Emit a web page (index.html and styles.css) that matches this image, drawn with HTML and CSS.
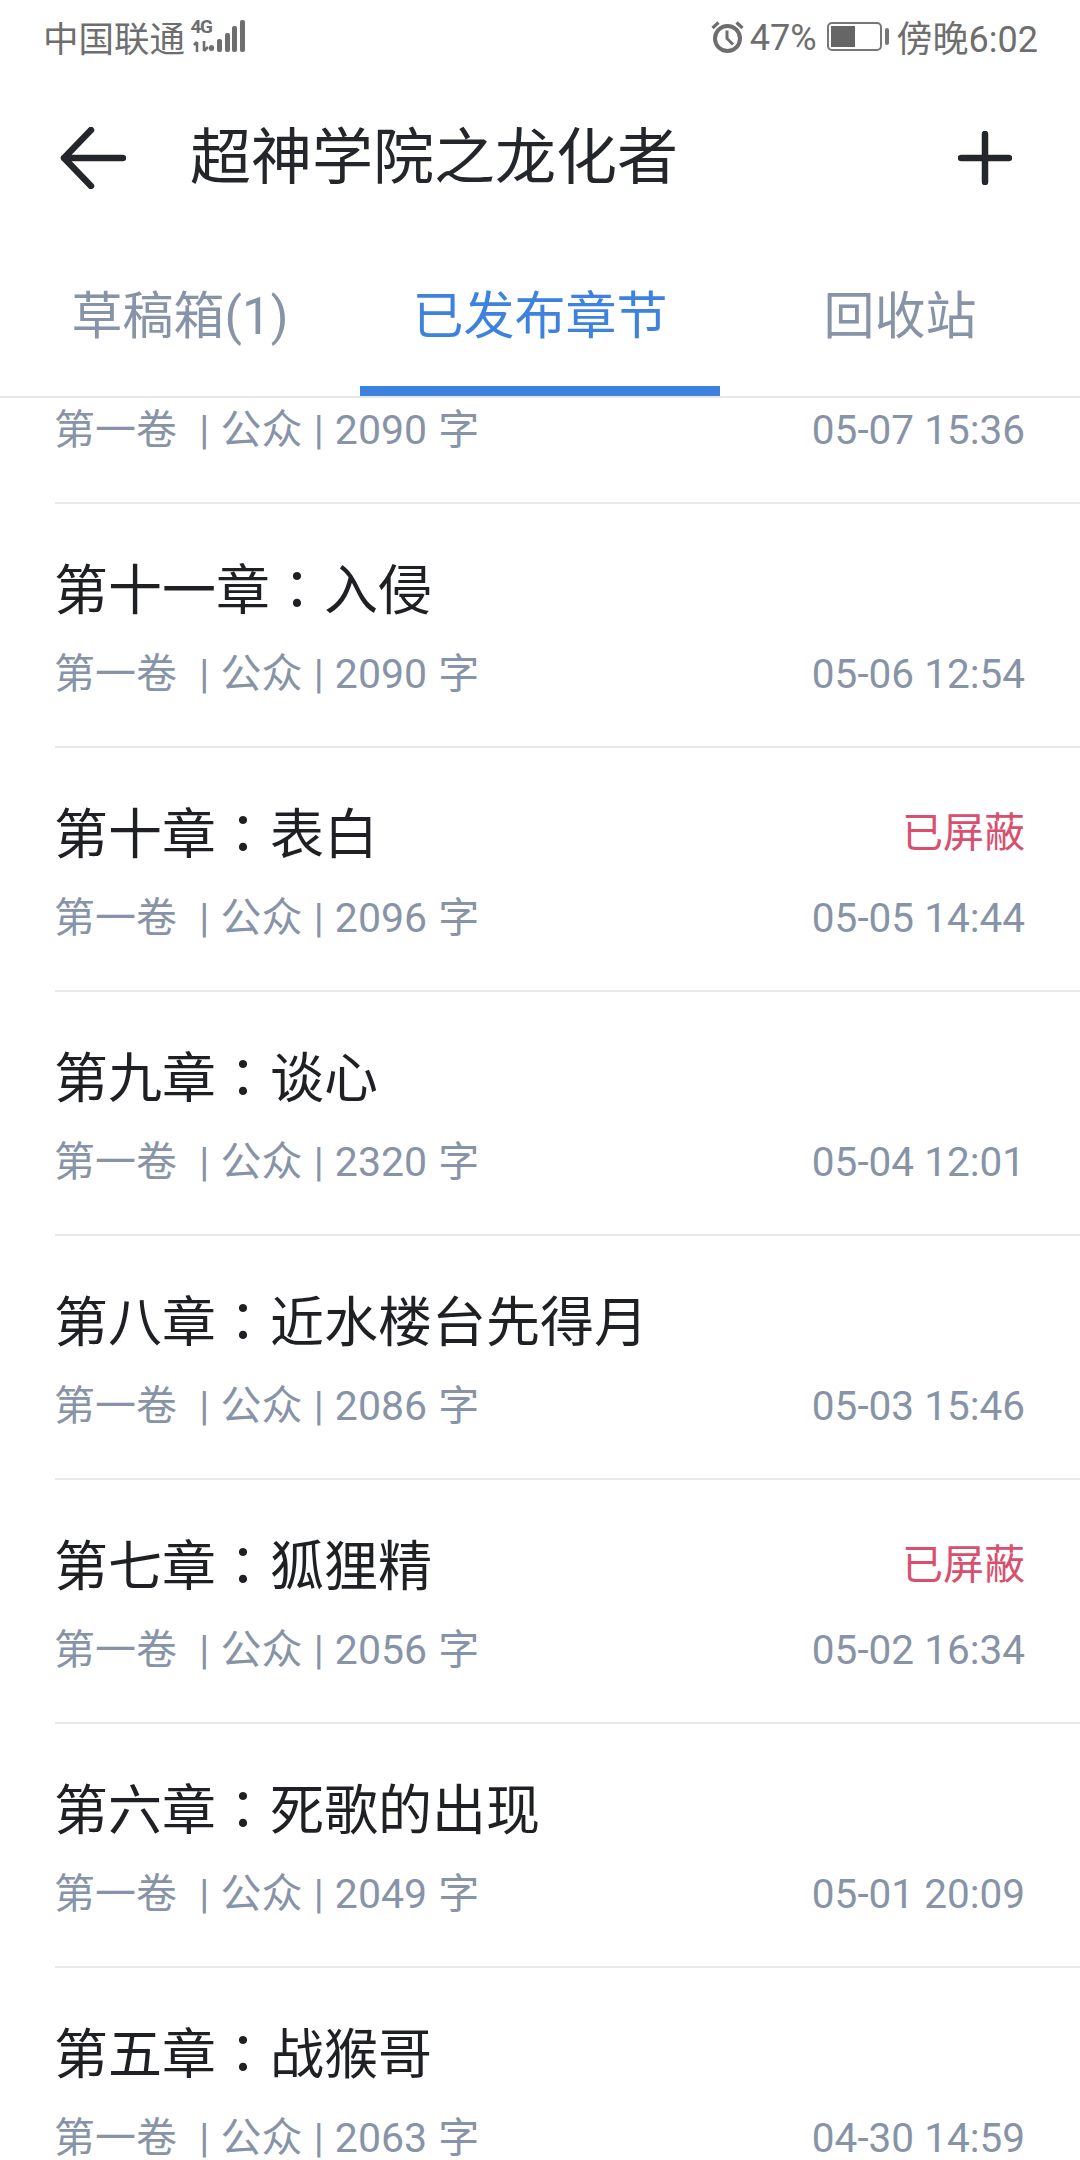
FILE: index.html
```html
<!DOCTYPE html>
<html lang="zh-CN">
<head>
<meta charset="utf-8">
<title>已发布章节</title>
<link rel="stylesheet" href="styles.css">
</head>
<body>
<div class="app">
  <div class="status">
    <div class="status-left">
      <span class="carrier">中国联通</span>
      <div class="net">
        <span class="net-label">4G</span>
        <svg class="net-arrows" width="17" height="11" viewBox="0 0 17 11"><path d="M4 11V1M1 4 4 1M11 0V10M11 10 15 6" fill="none" stroke="#6e6e6e" stroke-width="2.6"/></svg>
      </div>
      <svg class="signal" width="36" height="32" viewBox="0 0 36 32"><g fill="#6e6e6e"><rect x="0" y="25" width="5" height="6" rx="2.5"/><rect x="8" y="19" width="5" height="13" rx="2"/><rect x="16" y="13" width="5" height="19" rx="2"/><rect x="23" y="6" width="5" height="26" rx="2"/><rect x="31" y="0" width="5" height="32" rx="2"/></g></svg>
    </div>
    <div class="status-right">
      <svg class="alarm" width="33" height="33" viewBox="0 0 33 33"><circle cx="16.5" cy="18.5" r="12.5" fill="none" stroke="#6e6e6e" stroke-width="4"/><path d="M16 10.5V18.5L22 24.5" fill="none" stroke="#6e6e6e" stroke-width="3"/><path d="M1.5 8 7.5 2.5M31.5 8 25.5 2.5" fill="none" stroke="#6e6e6e" stroke-width="3.2"/></svg>
      <span class="pct">47%</span>
      <div class="battery"><div class="battery-fill"></div></div>
      <div class="battery-cap"></div>
      <span class="clock">傍晚6:02</span>
    </div>
  </div>

  <div class="nav">
    <svg class="nav-back" width="66" height="62" viewBox="0 0 66 62"><path d="M31 3 4 31 31 59M4 31H63" fill="none" stroke="#23262b" stroke-width="6.5" stroke-linecap="round" stroke-linejoin="round"/></svg>
    <div class="nav-title">超神学院之龙化者</div>
    <svg class="nav-add" width="54" height="54" viewBox="0 0 54 54"><path d="M27 3V51M3 27H51" fill="none" stroke="#23262b" stroke-width="6.5" stroke-linecap="round"/></svg>
  </div>

  <div class="tabs">
    <div class="tab">草稿箱(1)</div>
    <div class="tab tab-active">已发布章节</div>
    <div class="tab">回收站</div>
  </div>

  <div class="list">
    <div class="row row-clipped">
      <div class="meta"><span class="info">第一卷 &nbsp;| 公众 | 2090 字</span><span>05-07 15:36</span></div>
    </div>
    <div class="row">
      <div class="head"><span class="name">第十一章<span class="colon" lang="zh-TW">：</span>入侵</span></div>
      <div class="meta"><span class="info">第一卷 &nbsp;| 公众 | 2090 字</span><span>05-06 12:54</span></div>
    </div>
    <div class="row">
      <div class="head"><span class="name">第十章<span class="colon" lang="zh-TW">：</span>表白</span><span class="blocked">已屏蔽</span></div>
      <div class="meta"><span class="info">第一卷 &nbsp;| 公众 | 2096 字</span><span>05-05 14:44</span></div>
    </div>
    <div class="row">
      <div class="head"><span class="name">第九章<span class="colon" lang="zh-TW">：</span>谈心</span></div>
      <div class="meta"><span class="info">第一卷 &nbsp;| 公众 | 2320 字</span><span>05-04 12:01</span></div>
    </div>
    <div class="row">
      <div class="head"><span class="name">第八章<span class="colon" lang="zh-TW">：</span>近水楼台先得月</span></div>
      <div class="meta"><span class="info">第一卷 &nbsp;| 公众 | 2086 字</span><span>05-03 15:46</span></div>
    </div>
    <div class="row">
      <div class="head"><span class="name">第七章<span class="colon" lang="zh-TW">：</span>狐狸精</span><span class="blocked">已屏蔽</span></div>
      <div class="meta"><span class="info">第一卷 &nbsp;| 公众 | 2056 字</span><span>05-02 16:34</span></div>
    </div>
    <div class="row">
      <div class="head"><span class="name">第六章<span class="colon" lang="zh-TW">：</span>死歌的出现</span></div>
      <div class="meta"><span class="info">第一卷 &nbsp;| 公众 | 2049 字</span><span>05-01 20:09</span></div>
    </div>
    <div class="row">
      <div class="head"><span class="name">第五章<span class="colon" lang="zh-TW">：</span>战猴哥</span></div>
      <div class="meta"><span class="info">第一卷 &nbsp;| 公众 | 2063 字</span><span>04-30 14:59</span></div>
    </div>
  </div>
</div>
</body>
</html>
```
FILE: styles.css
```css
* { box-sizing: border-box; }
html, body { margin: 0; height: 100%; }
body { background: #fff; font-family: Roboto, "Noto Sans CJK SC", sans-serif; }
.app { width: 1080px; height: 2160px; overflow: hidden; display: flex; flex-direction: column; }

.status { height: 72px; flex: none; padding: 0 42px 0 43px; display: flex; justify-content: space-between; align-items: center; color: #6e6e6e; }
.status-left, .status-right { display: flex; align-items: center; }
.carrier { font-size: 35.5px; }
.net { width: 18px; margin-left: 7px; display: flex; flex-direction: column; align-items: center; gap: 8px; }
.net-label { font-size: 19px; line-height: 13px; font-weight: 700; letter-spacing: -1.5px; font-family: Roboto, sans-serif; }
.net-arrows { display: block; }
.signal { margin-left: -1px; }
.alarm { margin-right: 6px; }
.pct { font-size: 36px; position: relative; top: 2px; }
.battery { width: 55px; height: 29px; margin-left: 10px; border: 2px solid #777; border-radius: 5px; padding: 2px; }
.battery-fill { width: 24px; height: 100%; background: #666; }
.battery-cap { width: 4px; height: 17px; margin-left: 3px; background: #777; border-radius: 2px; }
.clock { margin-left: 8px; font-size: 36px; }

.nav { height: 172px; flex: none; padding: 0 68px 0 60px; display: flex; align-items: center; }
.nav-title { margin-left: 64px; flex: 1; font-size: 61px; line-height: 80px; color: #23262b; }

.tabs { height: 154px; flex: none; display: grid; grid-template-columns: 360px 360px 360px; border-bottom: 2px solid #e6e8ea; }
.tab { display: flex; align-items: center; justify-content: center; padding-bottom: 16px; font-size: 51px; color: #8793a6; }
.tab-active { color: #3e82e0; box-shadow: inset 0 -10px 0 #3e82e0; }

.list { flex: 1; min-height: 0; overflow: hidden; }
.row { height: 244px; margin-left: 55px; padding: 47px 55px 0 0; border-bottom: 2px solid #e8e9eb; }
.row-clipped { height: 106px; padding-top: 12px; }
.row-clipped .meta { margin-top: 0; }
.head { display: flex; justify-content: space-between; align-items: center; height: 76px; }
.name { font-size: 54px; line-height: 76px; color: #1e2024; margin-left: -1px; }
.colon { font-family: "Noto Sans CJK TC", sans-serif; }
.blocked { font-size: 41px; color: #d9506f; margin-bottom: 8px; }
.meta { display: flex; justify-content: space-between; align-items: center; height: 40px; font-size: 40.5px; line-height: 40px; color: #8793a6; margin-top: 27px; }
.info { font-size: 41px; margin-left: -1px; word-spacing: 1px; }
```
